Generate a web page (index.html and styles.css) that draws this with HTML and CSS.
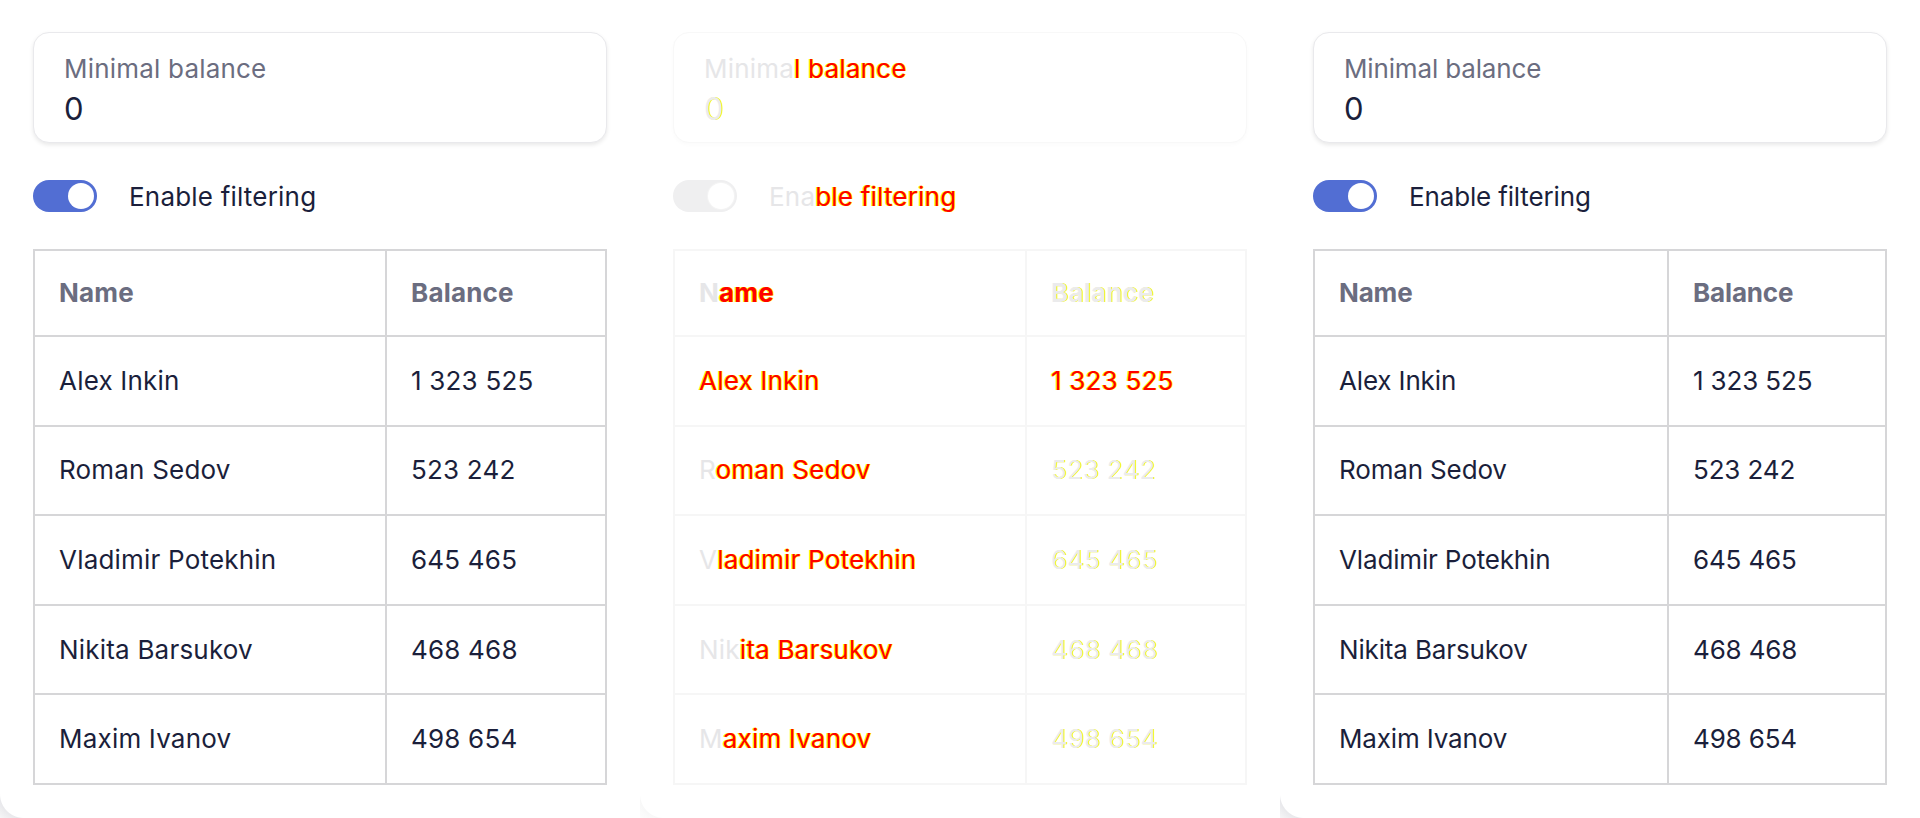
FILE: index.html
```html
<!DOCTYPE html>
<html lang="en">
<head>
<meta charset="utf-8">
<title>Filtering demo</title>
<link rel="stylesheet" href="styles.css">
</head>
<body>
<main class="panels">
  <section class="panel panel--a">
    <div class="field">
      <div class="field-label">Minimal balance</div>
      <div class="field-value">0</div>
    </div>
    <div class="switch-row">
      <span class="switch"><span class="knob"></span></span>
      <span class="switch-label">Enable filtering</span>
    </div>
    <table class="grid">
      <colgroup><col class="c1"><col class="c2"></colgroup>
      <thead><tr><th>Name</th><th>Balance</th></tr></thead>
      <tbody>
        <tr><td>Alex Inkin</td><td>1 323 525</td></tr>
        <tr><td>Roman Sedov</td><td>523 242</td></tr>
        <tr><td>Vladimir Potekhin</td><td>645 465</td></tr>
        <tr><td>Nikita Barsukov</td><td>468 468</td></tr>
        <tr><td>Maxim Ivanov</td><td>498 654</td></tr>
      </tbody>
    </table>
  </section>

  <section class="panel panel--diff">
    <div class="field">
      <div class="field-label"><span class="same">Minima</span><span class="diff">l balance</span></div>
      <div class="field-value"><span class="weak">0</span></div>
    </div>
    <div class="switch-row">
      <span class="switch"><span class="knob"></span></span>
      <span class="switch-label"><span class="same">Ena</span><span class="diff">ble filtering</span></span>
    </div>
    <table class="grid">
      <colgroup><col class="c1"><col class="c2"></colgroup>
      <thead><tr><th><span class="same">N</span><span class="diff">ame</span></th><th><span class="weak">Balance</span></th></tr></thead>
      <tbody>
        <tr><td><span class="diff">Alex Inkin</span></td><td><span class="diff">1 323 525</span></td></tr>
        <tr><td><span class="same">R</span><span class="diff">oman Sedov</span></td><td><span class="weak">523 242</span></td></tr>
        <tr><td><span class="same">V</span><span class="diff">ladimir Potekhin</span></td><td><span class="weak">645 465</span></td></tr>
        <tr><td><span class="same">Nik</span><span class="diff">ita Barsukov</span></td><td><span class="weak">468 468</span></td></tr>
        <tr><td><span class="same">M</span><span class="diff">axim Ivanov</span></td><td><span class="weak">498 654</span></td></tr>
      </tbody>
    </table>
  </section>

  <section class="panel panel--b">
    <div class="field">
      <div class="field-label">Minimal balance</div>
      <div class="field-value">0</div>
    </div>
    <div class="switch-row">
      <span class="switch"><span class="knob"></span></span>
      <span class="switch-label">Enable filtering</span>
    </div>
    <table class="grid">
      <colgroup><col class="c1"><col class="c2"></colgroup>
      <thead><tr><th>Name</th><th>Balance</th></tr></thead>
      <tbody>
        <tr><td>Alex Inkin</td><td>1 323 525</td></tr>
        <tr><td>Roman Sedov</td><td>523 242</td></tr>
        <tr><td>Vladimir Potekhin</td><td>645 465</td></tr>
        <tr><td>Nikita Barsukov</td><td>468 468</td></tr>
        <tr><td>Maxim Ivanov</td><td>498 654</td></tr>
      </tbody>
    </table>
  </section>
</main>
</body>
</html>
```

FILE: styles.css
```css
html, body {
  margin: 0;
  padding: 0;
  background: #ffffff;
}

body {
  font-family: Inter, "Noto Sans", "Liberation Sans", sans-serif;
  color: #1b1f3b;
  width: 1920px;
  height: 818px;
  overflow: hidden;
}

.panels {
  display: grid;
  grid-template-columns: repeat(3, 640px);
  height: 818px;
}

.panel {
  position: relative;
  box-sizing: border-box;
  height: 818px;
  padding: 32px 33px 0;
  display: flex;
  flex-direction: column;
  gap: 37px;
  background: #ffffff;
}

.panel::after {
  content: "";
  position: absolute;
  left: 0;
  bottom: 0;
  width: 24px;
  height: 24px;
  background: radial-gradient(circle at 100% 0, rgba(255,255,255,0) 23.5px, #e9e9ec 24.5px, #f6f6f7 100%);
}

.panel--a { letter-spacing: 0.2px; }
.panel--diff { letter-spacing: 0.2px; }
.panel--b { letter-spacing: -0.15px; }

/* input field */
.field {
  box-sizing: border-box;
  height: 111px;
  border: 1px solid #e9e9ec;
  border-radius: 16px;
  box-shadow: 0 2px 4px rgba(0, 0, 0, 0.09);
  padding: 20px 30px 15px;
  background: #ffffff;
}

.field-label {
  font-size: 26px;
  line-height: 32px;
  color: #6b6d80;
}

.field-value {
  margin-top: 6px;
  font-size: 31px;
  line-height: 36px;
  color: #1b1f3b;
}

/* toggle */
.switch-row {
  display: flex;
  align-items: center;
  gap: 32px;
  height: 32px;
}

.switch {
  box-sizing: border-box;
  width: 64px;
  height: 32px;
  border-radius: 16px;
  background: #526ed3;
  display: flex;
  align-items: center;
  justify-content: flex-end;
  padding: 0 3px;
  flex: none;
}

.knob {
  width: 26px;
  height: 26px;
  border-radius: 50%;
  background: #ffffff;
}

.switch-label {
  font-size: 26px;
  line-height: 32px;
  padding-top: 2px;
  color: #1b1f3b;
}

/* table */
.grid {
  border-collapse: separate;
  border-spacing: 0;
  table-layout: fixed;
  width: 574px;
  border-top: 2px solid #d6d6d8;
  border-left: 2px solid #d6d6d8;
}

.grid .c1 { width: 352px; }
.grid .c2 { width: 220px; }
.panel--b .grid .c1 { width: 354px; }
.panel--b .grid .c2 { width: 218px; }

.grid th,
.grid td {
  box-sizing: border-box;
  border-right: 2px solid #d6d6d8;
  border-bottom: 2px solid #d6d6d8;
  padding: 0 20px 0 24px;
  text-align: left;
  font-size: 26px;
  line-height: 32px;
  white-space: nowrap;
  vertical-align: middle;
}

.grid thead tr { height: 86px; }
.grid tbody tr { height: 89.6px; }

.grid th {
  font-weight: 700;
  color: #6b6d80;
}

.grid td {
  font-weight: 400;
  color: #1b1f3b;
}

/* diff panel (faded) */
.panel--diff::after {
  background: radial-gradient(circle at 100% 0, rgba(255,255,255,0) 23.5px, #f8f8f8 24.5px, #fdfdfd 100%);
}

.panel--diff .field {
  border-color: #f8f8f8;
  box-shadow: 0 2px 4px rgba(0, 0, 0, 0.02);
}

.panel--diff .switch { background: #efeff0; }
.panel--diff .knob { background: #ffffff; box-shadow: 0 0 0 1px #f4f4f4; }

.panel--diff .grid { border-color: #f6f6f6; }
.panel--diff .grid th,
.panel--diff .grid td { border-color: #f6f6f6; }

.panel--diff .field-label,
.panel--diff .field-value,
.panel--diff .switch-label,
.panel--diff .grid th,
.panel--diff .grid td { color: #e6e6e8; }

.panel--diff .same { color: #e6e6e8; }

.panel--diff .diff {
  color: #ff0000;
  text-shadow: 1px 0 0 #ffff00, -1px 0 0 #ffff00;
}

.panel--diff .weak {
  color: #ebebec;
  text-shadow: 1px 0 0 #ffff00;
}
```
